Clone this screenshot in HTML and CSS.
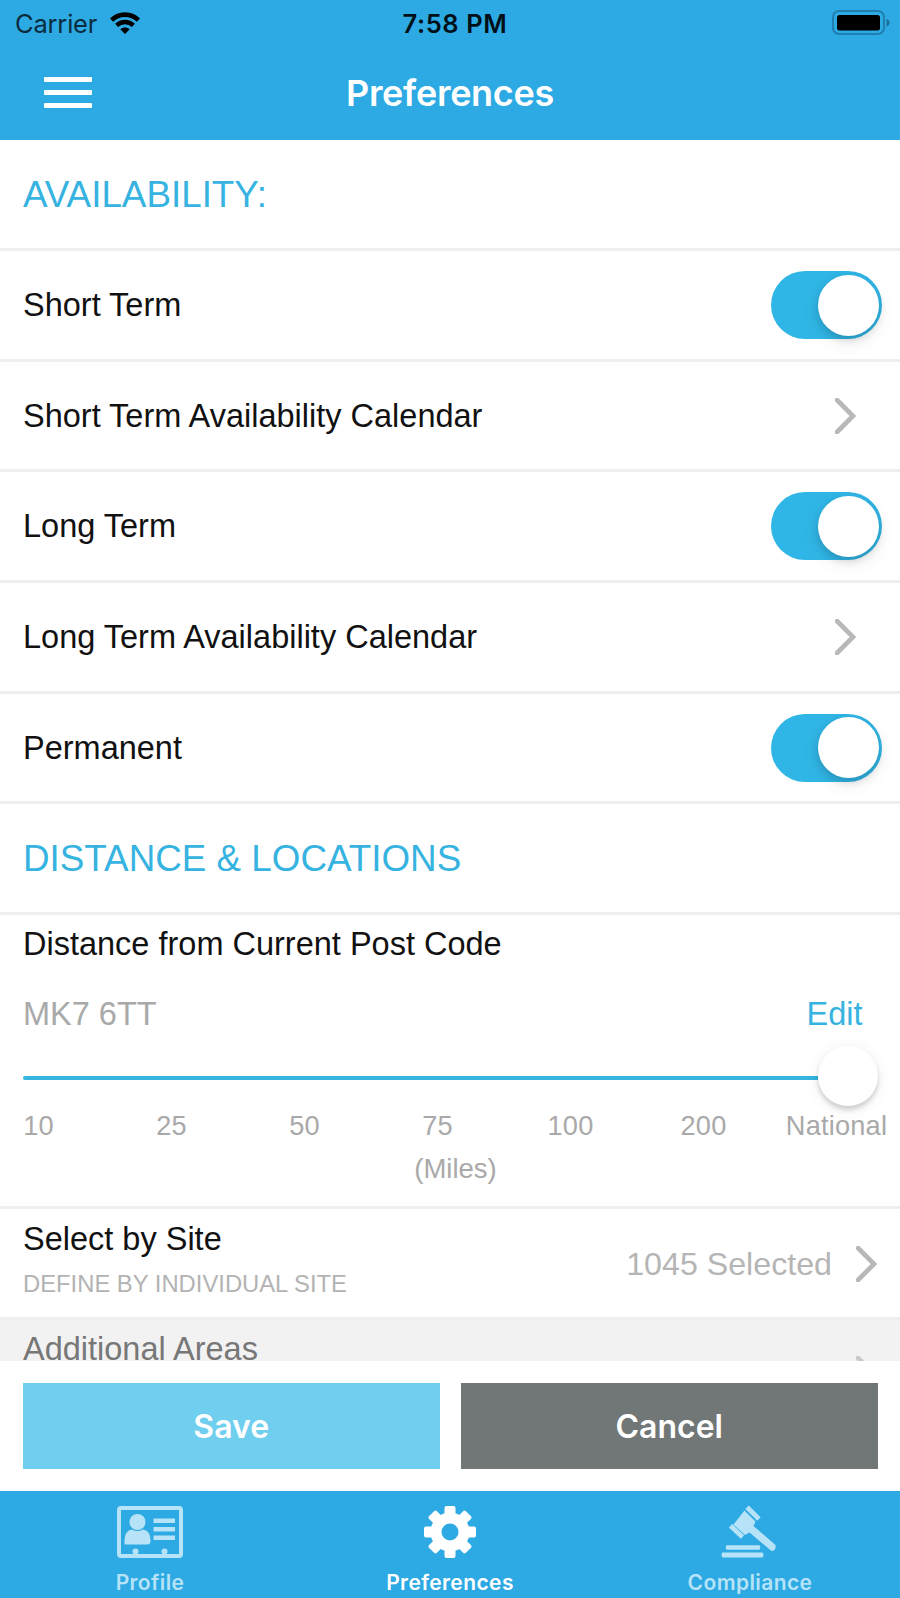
FILE: index.html
```html
<!DOCTYPE html>
<html lang="en">
<head>
<meta charset="utf-8">
<title>Preferences</title>
<link rel="stylesheet" href="styles.css">
</head>
<body>
<div class="app">
  <header class="header">
    <div class="status">
      <div class="carrier">
        <span class="carrier-name">Carrier</span>
        <svg class="wifi" viewBox="0 0 30 22"><path d="M1.6 8.200C9 .8 21 .8 28.400 8.200" fill="none" stroke="#000" stroke-width="4.600"/><path d="M6.600 13.400C11.500 8.800 18.500 8.800 23.400 13.400" fill="none" stroke="#000" stroke-width="4.400"/><path d="M10.300 17.200C13 15 17 15 19.700 17.200L15 22Z"/></svg>
      </div>
      <span class="clock">7:58 PM</span>
      <svg class="battery" viewBox="0 0 58 26"><rect x="1" y="1" width="51" height="23" rx="6" fill="none" stroke="#1e7fb0" stroke-width="2"/><rect x="5" y="5" width="43" height="15.500" rx="2.500"/><path d="M54.500 9v7.500q3-1 3-3.750t-3-3.750Z" fill="#1e709a"/></svg>
    </div>
    <div class="navbar">
      <div class="menu"><i></i><i></i><i></i></div>
      <h1 class="title">Preferences</h1>
      <span></span>
    </div>
  </header>

  <main class="list">
    <div class="row section">AVAILABILITY:</div>
    <div class="row"><span>Short Term</span><div class="toggle"><div class="knob"></div></div></div>
    <div class="row"><span>Short Term Availability Calendar</span><svg class="chevron inset" viewBox="0 0 22 36"><path d="M2 2L18 18L2 34"/></svg></div>
    <div class="row"><span>Long Term</span><div class="toggle"><div class="knob"></div></div></div>
    <div class="row"><span>Long Term Availability Calendar</span><svg class="chevron inset" viewBox="0 0 22 36"><path d="M2 2L18 18L2 34"/></svg></div>
    <div class="row"><span>Permanent</span><div class="toggle"><div class="knob"></div></div></div>
    <div class="row section">DISTANCE &amp; LOCATIONS</div>

    <section class="distance">
      <div class="distance-title">Distance from Current Post Code</div>
      <div class="postcode"><span>MK7 6TT</span><span class="edit">Edit</span></div>
      <div class="slider"><div class="track"></div><div class="thumb"></div></div>
      <div class="scale"><span>10</span><span>25</span><span>50</span><span>75</span><span>100</span><span>200</span><span>National</span></div>
      <div class="unit">(Miles)</div>
    </section>

    <div class="row site">
      <div class="site-text"><div>Select by Site</div><div class="hint">DEFINE BY INDIVIDUAL SITE</div></div>
      <div class="value"><span>1045 Selected</span><svg class="chevron" viewBox="0 0 22 36"><path d="M2 2L18 18L2 34"/></svg></div>
    </div>
    <div class="row site disabled">
      <div class="site-text"><div>Additional Areas</div></div>
      <div class="value"><svg class="chevron" viewBox="0 0 22 36"><path d="M2 2L18 18L2 34"/></svg></div>
    </div>
  </main>

  <div class="actions">
    <button class="btn save">Save</button>
    <button class="btn cancel">Cancel</button>
  </div>

  <nav class="tabs">
    <div class="tab">
      <svg class="icon" viewBox="0 0 66 54"><rect x="2" y="3" width="62" height="48" rx="2" fill="none" stroke="currentColor" stroke-width="4"/><circle cx="20.500" cy="17" r="8"/><path d="M7.500 39.500V35Q8 25.500 15 24.500Q20.500 27.500 26 24.500Q33 25.500 33.500 35V36.500Q33.500 39.500 30 39.500Z"/><path d="M36.500 15.700H58M36.500 24.200H58M36.500 32.700H58" stroke="currentColor" stroke-width="4.500"/><circle cx="18.500" cy="46.500" r="3"/><circle cx="47.500" cy="46.500" r="3"/></svg>
      <span>Profile</span>
    </div>
    <div class="tab active">
      <svg class="icon" viewBox="-33 -27 66 54"><g><rect id="tooth" x="-5.500" y="-26" width="11" height="52" rx="2"/><use href="#tooth" transform="rotate(45)"/><use href="#tooth" transform="rotate(90)"/><use href="#tooth" transform="rotate(135)"/><circle r="19.500"/></g><circle r="8.500" fill="#2da9e3"/></svg>
      <span>Preferences</span>
    </div>
    <div class="tab">
      <svg class="icon" viewBox="1 0 66 54"><path d="M10.500 40.300H43.500Q45 42.500 43.500 44.700H10.500Q9 42.500 10.500 40.300ZM6.500 47.500H46.500Q48.500 50 46.500 52.500H6.500Q4.500 50 6.500 47.500Z"/><path d="M28.500 5.500L39.500 16.500L37.500 21L59.500 40Q60.500 45.500 55.500 46L33.500 27.500L29 30L17.500 19.500Z"/><path d="M31 2.200L43 14M14.500 20.700L26.500 32" stroke="currentColor" stroke-width="4.800"/></svg>
      <span>Compliance</span>
    </div>
  </nav>
</div>
</body>
</html>
```
FILE: styles.css
```css
* { box-sizing: border-box; }

body {
  margin: 0;
  background: #fff;
  color: #111;
  font-family: "Liberation Sans", Arial, sans-serif;
  font-size: 32.5px;
  line-height: 38px;
}

.app {
  display: flex;
  flex-direction: column;
  width: 900px;
  height: 1598px;
  overflow: hidden;
}

.header {
  flex: none;
  height: 140.3px;
  background: #2da9e3;
  font-family: Inter, sans-serif;
}

.status {
  display: grid;
  grid-template-columns: 1fr auto 1fr;
  align-items: center;
  height: 48px;
  padding: 0 10px 0 15px;
  font-size: 25.5px;
}

.carrier { display: flex; align-items: center; gap: 13px; color: #0a2c3d; }
.carrier-name { letter-spacing: -0.2px; }
.wifi { width: 30px; height: 22px; margin-top: -2px; }
.clock { padding-left: 5px; color: #001018; font-weight: 600; letter-spacing: 0.6px; }
.battery { width: 58px; height: 26px; justify-self: end; margin-top: -2px; }

.navbar {
  display: grid;
  grid-template-columns: 1fr auto 1fr;
  align-items: center;
  height: 89px;
  padding: 0 44px;
}

.menu { display: flex; flex-direction: column; gap: 7.3px; width: 48px; }
.menu i { height: 5.5px; border-radius: 1px; background: #fff; }

.title {
  margin: 0;
  color: #fff;
  font-size: 36px;
  font-weight: 600;
  letter-spacing: -0.3px;
}

.list { flex: 1; min-height: 0; overflow: hidden; }

.row {
  display: flex;
  align-items: center;
  justify-content: space-between;
  height: 110.67px;
  padding: 0.6px 18px 0 23px;
  border-bottom: 3px solid #eee;
}

.section { padding-top: 2px; color: #36b3e0; font-size: 36.8px; }

.toggle {
  display: flex;
  align-items: center;
  justify-content: flex-end;
  width: 111px;
  height: 68px;
  padding-right: 3.5px;
  border-radius: 34px;
  background: #30b6e6;
}

.knob {
  width: 61px;
  height: 61px;
  border-radius: 50%;
  background: #fff;
  box-shadow: 0 4px 8px rgba(0, 0, 0, 0.15), 0 6px 20px rgba(0, 0, 0, 0.07);
}

.chevron {
  width: 22px;
  height: 36px;
  fill: none;
  stroke: #b8b8b8;
  stroke-width: 4.6;
  stroke-linecap: round;
}

.inset { margin-right: 25.5px; }

.distance {
  height: 294px;
  padding: 10px 23px 0;
  border-bottom: 3px solid #eee;
  color: #a9a9a9;
}

.distance-title { color: #111; }

.postcode {
  display: flex;
  justify-content: space-between;
  margin-top: 32px;
}

.edit { margin-right: 14.5px; color: #36b3e0; }

.slider {
  display: flex;
  align-items: center;
  height: 60px;
  margin: 13px -2px 0 0;
}

.track { flex: 1; height: 4.5px; margin-top: 4px; border-radius: 2px 0 0 2px; background: #36b5df; }

.thumb {
  width: 60px;
  height: 60px;
  margin-right: 1px;
  border-radius: 50%;
  background: #fff;
  box-shadow: 0 4px 5px rgba(0, 0, 0, 0.16), 0 2px 16px rgba(0, 0, 0, 0.07);
}

.scale {
  display: grid;
  grid-template-columns: repeat(7, 133px);
  margin: 1px -51px 0 -51px;
  font-size: 27.2px;
  letter-spacing: 0.2px;
  text-align: center;
}

.unit { margin-top: 5px; font-size: 27.5px; text-align: center; padding-left: 11px; }

.site { align-items: flex-start; padding: 11.5px 22px 0 23px; }
.site-text { display: flex; flex-direction: column; gap: 8px; }
.hint { color: #b3b3b3; font-size: 23.8px; line-height: 36px; }
.value { display: flex; align-items: center; gap: 24px; margin-top: 24.5px; color: #b5b5b5; font-size: 32.2px; }
.disabled { padding-top: 10.5px; background: #f2f2f2; color: #777; border: 0; }
.disabled .value { margin-top: 26px; opacity: 0.7; }

.actions {
  flex: none;
  display: grid;
  grid-template-columns: 416.5px 416.5px;
  gap: 21.5px;
  height: 129.5px;
  padding: 22px 0 21.5px 23px;
}

.btn {
  border: 0;
  padding: 1px 0 0;
  color: #fff;
  font: 600 32px/38px Inter, sans-serif;
}

.save { background: #70ceef; }
.cancel { background: #717676; }

.tabs {
  flex: none;
  display: grid;
  grid-template-columns: repeat(3, 1fr);
  height: 107.5px;
  background: #2da9e3;
}

.tab {
  display: flex;
  flex-direction: column;
  align-items: center;
  padding-top: 14.5px;
  color: #b6e3f8;
  font: 600 21px/28px Inter, sans-serif;
  letter-spacing: 0.4px;
}

.active { color: #fff; }
.icon { width: 66px; height: 54px; margin-bottom: 10px; fill: currentColor; }
```
